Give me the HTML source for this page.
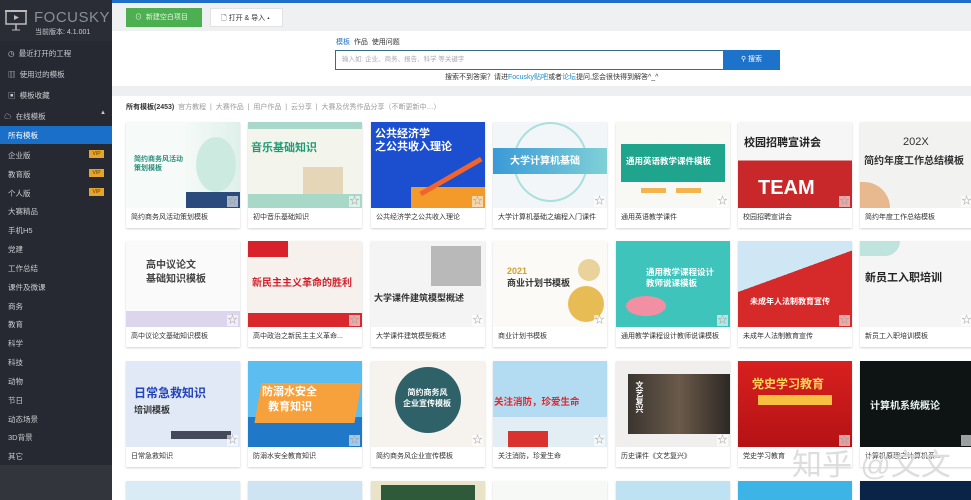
<!DOCTYPE html>
<html style="width:971px;height:500px;overflow:hidden"><head><meta charset="utf-8"><style>
*{margin:0;padding:0;box-sizing:border-box}
html,body{width:971px;height:500px;overflow:hidden}
body{position:relative;background:#fff;font-family:"Liberation Sans","Noto Sans CJK SC",sans-serif;font-size:8px;color:#333}
.a{position:absolute}
#sb{left:0;top:0;width:112px;height:500px;background:#262931}
.si{position:absolute;left:8px;color:#c9ccd2;font-size:7.5px}
.vip{position:absolute;right:8px;width:15px;height:8px;background:#e6a52a;color:#5a3a00;font-size:5px;line-height:8px;text-align:center}
.card{position:absolute;width:114px;height:106px;background:#fff;box-shadow:0 1px 2px rgba(0,0,0,.18)}
.img{position:absolute;left:0;top:0;width:114px;height:86px;overflow:hidden}
.lb{position:absolute;left:5px;top:90px;font-size:7px;color:#333;white-space:nowrap}
.t{position:absolute;font-weight:bold;white-space:nowrap}
.star{position:absolute;right:2px;top:74px;width:11px;height:11px;color:#999;font-size:10px;line-height:11px;text-align:center;background:rgba(255,255,255,.6)}
</style></head><body>
<div class="a" style="left:0;top:0;width:971px;height:3px;background:#1d6fc8"></div>
<div id="sb" class="a" style="top:0">
 <div class="a" style="left:0;top:0;width:112px;height:41px;background:#2a2d35"></div>
 <svg class="a" style="left:5px;top:9px" width="22" height="24" viewBox="0 0 22 24"><rect x="1" y="2" width="20" height="13" fill="none" stroke="#bbb" stroke-width="1.5"/><line x1="0" y1="2" x2="22" y2="2" stroke="#bbb" stroke-width="2"/><path d="M9 6 L14 8.5 L9 11 Z" fill="#bbb"/><line x1="11" y1="15" x2="11" y2="21" stroke="#bbb" stroke-width="1.5"/><line x1="7" y1="21" x2="15" y2="21" stroke="#bbb"/></svg>
 <div class="a" style="left:34px;top:9px;font-size:15px;color:#8a8e96;letter-spacing:.5px">FOCUSKY</div>
 <div class="a" style="left:35px;top:27px;font-size:7px;color:#c9ccd2">当前版本: 4.1.001</div>
 <div class="si" style="top:48px">◷&nbsp; 最近打开的工程</div>
 <div class="si" style="top:69px">▥&nbsp; 使用过的模板</div>
 <div class="si" style="top:90px">▣&nbsp; 模板收藏</div>
 <div class="si" style="top:111px;left:4px">☁&nbsp; 在线模板</div>
 <div class="a" style="left:100px;top:110px;color:#c9ccd2;font-size:6px">▲</div>
 <div class="a" style="left:0;top:126px;width:112px;height:18px;background:#1a6fc9"></div>
 <div class="si" style="top:130px;color:#fff">所有模板</div>
 <div class="si" style="top:150px">企业版</div><div class="vip" style="top:150px">VIP</div>
 <div class="si" style="top:169px">教育版</div><div class="vip" style="top:169px">VIP</div>
 <div class="si" style="top:188px">个人版</div><div class="vip" style="top:188px">VIP</div>
 <div class="si" style="top:206px">大赛精品</div>
 <div class="si" style="top:225px">手机H5</div>
 <div class="si" style="top:244px">党建</div>
 <div class="si" style="top:263px">工作总结</div>
 <div class="si" style="top:282px">课件及微课</div>
 <div class="si" style="top:301px">商务</div>
 <div class="si" style="top:319px">教育</div>
 <div class="si" style="top:338px">科学</div>
 <div class="si" style="top:357px">科技</div>
 <div class="si" style="top:376px">动物</div>
 <div class="si" style="top:395px">节日</div>
 <div class="si" style="top:414px">动态场景</div>
 <div class="si" style="top:432px">3D背景</div>
 <div class="si" style="top:451px">其它</div>
 <div class="a" style="left:0;top:465px;width:112px;height:35px;background:#32353c"></div>
</div>
<div class="a" style="left:112px;top:3px;width:859px;height:28px;background:#eef0f2"></div>
<div class="a" style="left:126px;top:8px;width:76px;height:19px;background:#4caf50;color:#e8f5e8;font-size:7px;line-height:19px;padding-left:9px">⊙&nbsp; 新建空白项目</div>
<div class="a" style="left:210px;top:8px;width:73px;height:19px;background:#fff;color:#333;font-size:7px;line-height:19px;padding-left:10px;border:1px solid #e2e2e2">🗋 打开 &amp; 导入 ▴</div>
<div class="a" style="left:112px;top:86px;width:859px;height:10px;background:#eeeff1"></div>
<div class="a" style="left:336px;top:37px;font-size:7px;color:#333"><span style="color:#1d6fc8">模板</span>&nbsp; 作品&nbsp; 使用问题</div>
<div class="a" style="left:335px;top:50px;width:390px;height:20px;border:1px solid #3a6a8a;background:#fff;color:#aaa;font-size:6.5px;line-height:18px;padding-left:6px">输入如: 企业、商务、报告、科学 等关键字</div>
<div class="a" style="left:723px;top:50px;width:57px;height:20px;background:#1d73c9;color:#fff;font-size:7px;line-height:20px;text-align:center">⚲ 搜索</div>
<div class="a" style="left:445px;top:72px;font-size:7px;color:#333">搜索不到答案？请进<span style="color:#1d8ac9">Focusky贴吧</span>或者<span style="color:#1d8ac9">论坛</span>提问,您会很快得到解答^_^</div>
<div class="a" style="left:126px;top:102px;font-size:7px;color:#999"><b style="color:#333">所有模板(2453)</b>&nbsp; 官方教程 &nbsp;|&nbsp; 大赛作品 &nbsp;|&nbsp; 用户作品 &nbsp;|&nbsp; 云分享 &nbsp;|&nbsp; 大赛及优秀作品分享（不断更新中…）</div>

<div class="card" style="left:126px;top:122px"><div class="img" style="background:linear-gradient(90deg,#f6faf8 50%,#dff0ea)"><div class="t" style="left:8px;top:33px;color:#2a8f7a;font-size:7px;line-height:9px">简约商务风活动<br>策划模板</div><div class="a" style="left:70px;top:15px;width:40px;height:55px;background:#cdeae1;border-radius:50%"></div><div class="a" style="left:60px;top:70px;width:54px;height:16px;background:#2c4b7d"></div></div><div class="star">☆</div><div class="lb">简约商务风活动策划模板</div></div>
<div class="card" style="left:248px;top:122px"><div class="img" style="background:#f3f4ec"><div class="a" style="left:0;top:0;width:114px;height:7px;background:#a9d8cb"></div><div class="t" style="left:3px;top:17px;color:#1f9b76;font-size:11px">音乐基础知识</div><div class="a" style="left:55px;top:45px;width:40px;height:30px;background:#e6d6b8"></div><div class="a" style="left:0;top:72px;width:114px;height:14px;background:#a8d8c8"></div></div><div class="star">☆</div><div class="lb">初中音乐基础知识</div></div>
<div class="card" style="left:371px;top:122px"><div class="img" style="background:#1c4fcf"><div class="t" style="left:4px;top:6px;color:#fff;font-size:11px;line-height:13px">公共经济学<br>之公共收入理论</div><div class="a" style="left:40px;top:65px;width:74px;height:21px;background:#f39a2b"></div><div class="a" style="left:45px;top:52px;width:70px;height:5px;background:#f3642b;transform:rotate(-30deg)"></div></div><div class="star">☆</div><div class="lb">公共经济学之公共收入理论</div></div>
<div class="card" style="left:493px;top:122px"><div class="img" style="background:#f2f6f8"><div class="a" style="left:20px;top:0;width:75px;height:80px;border:2px solid #a8e0de;border-radius:50%"></div><div class="a" style="left:0;top:26px;width:114px;height:26px;background:linear-gradient(90deg,#3a9ad8,#7fd0d6)"></div><div class="t" style="left:17px;top:30px;color:#fff;font-size:10px">大学计算机基础</div></div><div class="star">☆</div><div class="lb">大学计算机基础之编程入门课件</div></div>
<div class="card" style="left:616px;top:122px"><div class="img" style="background:#f8f8f5"><div class="a" style="left:5px;top:22px;width:104px;height:38px;background:#1fa58e"></div><div class="t" style="left:10px;top:33px;color:#fff;font-size:8.5px">通用英语教学课件模板</div><div class="a" style="left:25px;top:66px;width:25px;height:5px;background:#f3b44f"></div><div class="a" style="left:60px;top:66px;width:25px;height:5px;background:#f3b44f"></div></div><div class="star">☆</div><div class="lb">通用英语教学课件</div></div>
<div class="card" style="left:738px;top:122px"><div class="img" style="background:linear-gradient(#f6f6f6 45%,#c8282a 45%)"><div class="t" style="left:6px;top:12px;color:#222;font-size:11px">校园招聘宣讲会</div><div class="t" style="left:20px;top:55px;color:#fff;font-size:20px">TEAM</div></div><div class="star">☆</div><div class="lb">校园招聘宣讲会</div></div>
<div class="card" style="left:860px;top:122px"><div class="img" style="background:#f2f2f0"><div class="a" style="left:0;top:60px;width:30px;height:26px;background:#e8b98f;border-radius:0 30px 0 0"></div><div class="t" style="left:43px;top:14px;color:#333;font-size:11px;font-weight:normal">202X</div><div class="t" style="left:4px;top:30px;color:#333;font-size:10px">简约年度工作总结模板</div></div><div class="star">☆</div><div class="lb">简约年度工作总结模板</div></div>

<div class="card" style="left:126px;top:241px"><div class="img" style="background:#fafafa"><div class="a" style="left:0;top:70px;width:114px;height:16px;background:#dcd6ec"></div><div class="t" style="left:20px;top:18px;color:#444;font-size:10px;line-height:14px">高中议论文<br>基础知识模板</div></div><div class="star">☆</div><div class="lb">高中议论文基础知识模板</div></div>
<div class="card" style="left:248px;top:241px"><div class="img" style="background:#f7f1ee"><div class="a" style="left:0;top:0;width:40px;height:16px;background:#d8212a"></div><div class="t" style="left:4px;top:33px;color:#d0202a;font-size:10px">新民主主义革命的胜利</div><div class="a" style="left:0;top:72px;width:114px;height:14px;background:#d8282c"></div></div><div class="star">☆</div><div class="lb">高中政治之新民主主义革命...</div></div>
<div class="card" style="left:371px;top:241px"><div class="img" style="background:#f4f4f4"><div class="a" style="left:60px;top:5px;width:50px;height:40px;background:#b9b9b9"></div><div class="t" style="left:3px;top:50px;color:#333;font-size:9px">大学课件建筑模型概述</div></div><div class="star">☆</div><div class="lb">大学课件建筑模型概述</div></div>
<div class="card" style="left:493px;top:241px"><div class="img" style="background:#fbfaf6"><div class="t" style="left:14px;top:24px;color:#333;font-size:9px;line-height:12px"><span style="color:#d4a030">2021</span><br>商业计划书模板</div><div class="a" style="left:75px;top:45px;width:36px;height:36px;background:#e8bc55;border-radius:50%"></div><div class="a" style="left:85px;top:18px;width:22px;height:22px;background:#ead39a;border-radius:50%"></div></div><div class="star">☆</div><div class="lb">商业计划书模板</div></div>
<div class="card" style="left:616px;top:241px"><div class="img" style="background:#3fc4bc"><div class="t" style="left:30px;top:26px;color:#fff;font-size:8.5px;line-height:11px">通用教学课程设计<br>教师说课模板</div><div class="a" style="left:10px;top:55px;width:40px;height:20px;background:#f28fa2;border-radius:50%"></div></div><div class="star">☆</div><div class="lb">通用教学课程设计教师说课模板</div></div>
<div class="card" style="left:738px;top:241px"><div class="img" style="background:linear-gradient(160deg,#cfe6f5 40%,#d62a2a 40%)"><div class="t" style="left:12px;top:55px;color:#fff;font-size:8px">未成年人法制教育宣传</div></div><div class="star">☆</div><div class="lb">未成年人法制教育宣传</div></div>
<div class="card" style="left:860px;top:241px"><div class="img" style="background:#f5f5f5"><div class="a" style="left:0;top:0;width:40px;height:15px;background:#bfe3dd;border-radius:0 0 30px 0"></div><div class="t" style="left:5px;top:28px;color:#222;font-size:11px">新员工入职培训</div></div><div class="star">☆</div><div class="lb">新员工入职培训模板</div></div>

<div class="card" style="left:126px;top:361px"><div class="img" style="background:#e1e9f6"><div class="t" style="left:8px;top:24px;color:#2546b8;font-size:12px;line-height:16px">日常急救知识<br><span style="font-size:9px;color:#333">培训模板</span></div><div class="a" style="left:45px;top:70px;width:60px;height:8px;background:#444a5a"></div></div><div class="star">☆</div><div class="lb">日常急救知识</div></div>
<div class="card" style="left:248px;top:361px"><div class="img" style="background:linear-gradient(#5cbdf0 65%,#1f78c8 65%)"><div class="a" style="left:10px;top:22px;width:100px;height:40px;background:#f7a13c;transform:skew(-10deg)"></div><div class="t" style="left:14px;top:24px;color:#fff;font-size:11px;line-height:15px">防溺水安全<br>&nbsp;&nbsp;教育知识</div></div><div class="star">☆</div><div class="lb">防溺水安全教育知识</div></div>
<div class="card" style="left:371px;top:361px"><div class="img" style="background:#f6f3ee"><div class="a" style="left:24px;top:6px;width:66px;height:66px;background:#2e6168;border-radius:50%"></div><div class="t" style="left:32px;top:26px;color:#fff;font-size:8px;line-height:11px">&nbsp;&nbsp;简约商务风<br>企业宣传模板</div></div><div class="star">☆</div><div class="lb">简约商务风企业宣传模板</div></div>
<div class="card" style="left:493px;top:361px"><div class="img" style="background:linear-gradient(#b3dcf3 65%,#e2eef3 65%)"><div class="t" style="left:1px;top:33px;color:#e2262a;font-size:9.5px">关注消防，珍爱生命</div><div class="a" style="left:15px;top:70px;width:40px;height:16px;background:#d9322f"></div></div><div class="star">☆</div><div class="lb">关注消防，珍爱生命</div></div>
<div class="card" style="left:616px;top:361px"><div class="img" style="background:#f0efee"><div class="a" style="left:12px;top:13px;width:102px;height:60px;background:linear-gradient(90deg,#3a3530,#6a5a4a,#2e2824)"></div><div class="t" style="left:18px;top:20px;color:#fff;font-size:8px;writing-mode:vertical-rl">文艺复兴</div></div><div class="star">☆</div><div class="lb">历史课件《文艺复兴》</div></div>
<div class="card" style="left:738px;top:361px"><div class="img" style="background:linear-gradient(#d8201f,#b51215)"><div class="t" style="left:14px;top:14px;color:#ffd85a;font-size:12px">党史学习教育</div><div class="a" style="left:20px;top:34px;width:74px;height:10px;background:#f8c040"></div></div><div class="star">☆</div><div class="lb">党史学习教育</div></div>
<div class="card" style="left:860px;top:361px"><div class="img" style="background:#0e1414"><div class="t" style="left:10px;top:36px;color:#e8f0f0;font-size:10px">计算机系统概论</div></div><div class="star">☆</div><div class="lb">计算机原理之计算机系...</div></div>

<div class="card" style="left:126px;top:481px;height:19px"><div class="img" style="background:#d9ecf6;height:19px"></div></div>
<div class="card" style="left:248px;top:481px;height:19px"><div class="img" style="background:#cfe4f2;height:19px"></div></div>
<div class="card" style="left:371px;top:481px;height:19px"><div class="img" style="background:#e9e3c8;height:19px"><div class="a" style="left:10px;top:4px;width:94px;height:15px;background:#2f5a3a"></div></div></div>
<div class="card" style="left:493px;top:481px;height:19px"><div class="img" style="background:#f7f9f6;height:19px"></div></div>
<div class="card" style="left:616px;top:481px;height:19px"><div class="img" style="background:#bfe2f3;height:19px"></div></div>
<div class="card" style="left:738px;top:481px;height:19px"><div class="img" style="background:#3cb4e6;height:19px"></div></div>
<div class="card" style="left:860px;top:481px;height:19px"><div class="img" style="background:#0a2448;height:19px"></div></div>

<div class="a" style="left:792px;top:440px;font-size:30px;color:rgba(215,215,215,.85);white-space:nowrap">知乎 @文文</div>
</body></html>
